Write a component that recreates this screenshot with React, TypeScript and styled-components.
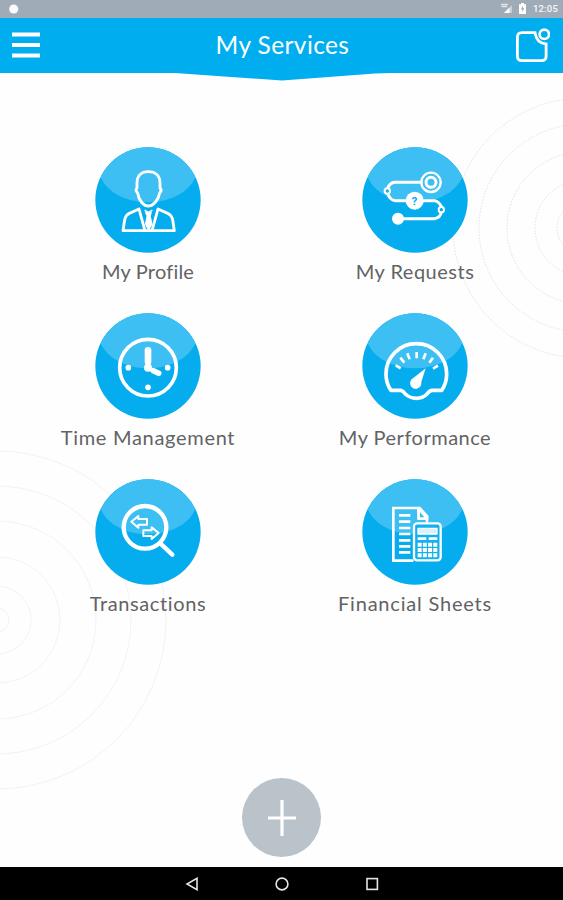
import React from 'react';
import styled, { createGlobalStyle } from 'styled-components';

const GlobalStyle = createGlobalStyle`
  * { box-sizing: border-box; }
  body { margin: 0; background: #fefefe; font-family: Lato, "Open Sans", sans-serif; }
  svg { display: block; }
`;

const Screen = styled.div`
  position: relative;
  display: flex;
  flex-direction: column;
  width: 563px;
  height: 900px;
  overflow: hidden;
  background: #fefefe;
`;

const Backdrop = styled.svg`
  position: absolute;
  inset: 0;
  pointer-events: none;
`;

const StatusBar = styled.div`
  display: flex;
  align-items: center;
  justify-content: space-between;
  height: 17.5px;
  padding: 0 5px 0 8px;
  background: #a0abb8;
`;

const StatusGroup = styled.div`
  display: flex;
  align-items: center;
`;

const Clock = styled.span`
  margin-left: 5px;
  color: #f4f7f9;
  font: 500 9.5px/17px Roboto, sans-serif;
  letter-spacing: 0.2px;
`;

const Header = styled.header`
  position: relative;
  display: flex;
  align-items: center;
  justify-content: space-between;
  height: 55.5px;
  padding: 0 13px 0 12px;
  background: #00aeef;
`;

const HeaderPoint = styled.svg`
  position: absolute;
  left: 175px;
  top: 55px;
`;

const Title = styled.h1`
  margin: 0 0 1px 10px;
  color: #fff;
  font-size: 24.5px;
  font-weight: 400;
  line-height: 30px;
  letter-spacing: 0.4px;
`;

const IconButton = styled.button`
  display: flex;
  padding: 0;
  border: 0;
  background: none;
`;

const Services = styled.main`
  position: relative;
  flex: 1;
  display: grid;
  grid-template-columns: 267px 267px;
  grid-auto-rows: 166px;
  justify-content: center;
  padding-top: 74px;
`;

const Service = styled.div`
  display: flex;
  flex-direction: column;
  align-items: center;
`;

const Label = styled.span<{ $spacing: number }>`
  margin-top: 6px;
  color: #626365;
  font-size: 20px;
  line-height: 24px;
  letter-spacing: ${(p) => p.$spacing}px;
  white-space: nowrap;
`;

const Footer = styled.div`
  position: relative;
  display: flex;
  justify-content: center;
  height: 89px;
`;

const AddButton = styled.button`
  display: flex;
  align-items: center;
  justify-content: center;
  width: 79px;
  height: 79px;
  padding: 0;
  border: 0;
  border-radius: 50%;
  background: #bac3ca;
`;

const NavBar = styled.nav`
  position: relative;
  display: flex;
  align-items: center;
  justify-content: center;
  gap: 76px;
  height: 33px;
  background: #000;
`;

type BadgeProps = { id: string; origin: [number, number]; children: React.ReactNode };

function Badge({ id, origin, children }: BadgeProps) {
  return (
    <svg width="106" height="106" viewBox="0 0 318 318">
      <clipPath id={id}>
        <circle cx="159" cy="159" r="158" />
      </clipPath>
      <circle cx="159" cy="159" r="158" fill="#05adee" />
      <ellipse cx="159" cy="65" rx="146" ry="101" fill="#3dbff3" clipPath={`url(#${id})`} />
      <g
        transform={`translate(${-origin[0]} ${-origin[1]})`}
        fill="none"
        stroke="#fff"
        strokeWidth="10"
        strokeLinejoin="round"
        strokeLinecap="round"
      >
        {children}
      </g>
    </svg>
  );
}

const profile = (
  <g strokeWidth="8.5">
    <path d="M205 94C183 94 171 107 171 128L171 143Q164 150 173 158C176 180 190 197 205 197C220 197 235 180 239 158Q247 150 240 143L240 128C240 107 227 94 205 94Z" />
    <path d="M177 206L148 219Q137 225 134 238L129 271H283L278 238Q275 225 263 219L234 206L217 268M177 206L194 268" />
    <path d="M197 216H214L211 228L216 252L206 270L196 252L201 228Z" fill="#fff" strokeWidth="3" />
    <path d="M195 210L205 217L216 210" strokeWidth="4" />
  </g>
);

const requests = (
  <g strokeWidth="9">
    <path d="M229 126H150Q134 127 128 144V158Q133 179 151 181H183M233 181H269Q283 185 289 199V216Q286 232 269 235H160" />
    <circle cx="258" cy="126" r="29" strokeWidth="7" />
    <circle cx="258" cy="126" r="15" strokeWidth="9" />
    <circle cx="127" cy="152" r="8" fill="#16b3f0" strokeWidth="6" />
    <circle cx="289" cy="208" r="8" fill="#05adee" strokeWidth="6" />
    <circle cx="159" cy="235" r="18" fill="#fff" stroke="none" />
    <circle cx="209" cy="181" r="27" fill="#fff" stroke="none" />
    <text
      x="208"
      y="194"
      textAnchor="middle"
      fill="#05adee"
      stroke="none"
      fontFamily="Roboto, sans-serif"
      fontWeight="700"
      fontSize="35"
    >
      ?
    </text>
  </g>
);

const clock = (
  <g>
    <circle cx="294" cy="188" r="85" strokeWidth="11" />
    <path d="M294 136V170" strokeWidth="20" />
    <path d="M310 197L326 205" strokeWidth="17" />
    <g fill="#fff" stroke="none">
      <circle cx="294" cy="188" r="12" />
      <circle cx="235" cy="188" r="8.5" />
      <circle cx="353" cy="188" r="8.5" />
      <circle cx="294" cy="247" r="8.5" />
    </g>
  </g>
);

const gauge = (
  <g>
    <path
      d="M184 256H213Q221 258 227 267Q241 280 260 280Q279 280 292 267Q299 257 307 256H336Q351 235 351 207A91 91 0 0 0 169 207Q169 235 184 256Z"
      strokeWidth="11"
    />
    <path
      d="M198 181L213 190M212 158L224 173M233 145L240 163M261 141V160M288 145L281 163M310 158L299 173M325 182L310 191"
      strokeWidth="8"
      strokeLinecap="butt"
    />
    <path d="M288 190L275 231A17 17 0 1 1 251 219Z" fill="#fff" stroke="none" />
  </g>
);

const search = (
  <g>
    <circle cx="195" cy="172" r="64" strokeWidth="13" />
    <path d="M244 223L277 254" strokeWidth="13" />
    <path d="M154 155L175 138V147H201V164H175V173Z" strokeWidth="6" />
    <path d="M236 189L215 172V181H190V198H215V207Z" strokeWidth="6" />
  </g>
);

const sheets = (
  <g>
    <path d="M248 272H191V114H270L292 139V154M268 116V143H292" strokeWidth="8" strokeLinejoin="miter" />
    <path d="M262 114H273L296 139V150H263Z" fill="#fff" stroke="none" />
    <path d="M271 126V142H284Z" fill="#3dbff3" stroke="none" />
    <path
      d="M208 136H242M208 155H242M208 174H242M208 192H242M208 211H242M208 229H242M208 247H242"
      strokeWidth="8"
      strokeLinecap="butt"
    />
    <rect x="253" y="160" width="80" height="111" rx="9" fill="#12b1ef" strokeWidth="7" />
    <rect x="265" y="175" width="57" height="17" fill="#d8f3fd" strokeWidth="4" />
    <path d="M264 206H290M297 206H323" strokeWidth="8" strokeLinecap="butt" />
    <path
      d="M264 224H323M264 240H323M264 256H323"
      strokeWidth="12"
      strokeDasharray="12 3.6"
      strokeLinecap="butt"
    />
  </g>
);

const services: { label: string; spacing: number; origin: [number, number]; icon: React.ReactNode }[] = [
  { label: 'My Profile', spacing: 0.2, origin: [45, 20], icon: profile },
  { label: 'My Requests', spacing: 0.5, origin: [51, 20], icon: requests },
  { label: 'Time Management', spacing: 0.7, origin: [135, 24], icon: clock },
  { label: 'My Performance', spacing: 0.5, origin: [97, 24], icon: gauge },
  { label: 'Transactions', spacing: 0.6, origin: [45, 27], icon: search },
  { label: 'Financial Sheets', spacing: 0.8, origin: [97, 27], icon: sheets },
];

export default function App() {
  return (
    <>
      <GlobalStyle />
      <Screen>
        <Backdrop width="563" height="900" fill="none">
          <g stroke="#dcdcdc" strokeWidth="0.9" strokeDasharray="1.5 1.5">
            {[26, 48, 76, 104, 130].map((r) => (
              <circle key={r} cx="583" cy="228" r={r} />
            ))}
          </g>
          <g stroke="#f0f0f0" strokeWidth="0.9">
            {[12, 34, 63, 99, 134, 169].map((r) => (
              <circle key={r} cx="-3" cy="620" r={r} />
            ))}
          </g>
        </Backdrop>

        <StatusBar>
          <svg width="12" height="12" viewBox="0 0 12 12">
            <circle cx="5.7" cy="6" r="4.6" fill="#f8fafb" />
          </svg>
          <StatusGroup>
            <svg width="28" height="13" viewBox="0 0 28 13">
              <path d="M1 2.5H8M1.5 4.5H7" stroke="#eef2f5" strokeWidth="1.3" opacity=".8" />
              <path d="M4 11L12 3V11Z" fill="#c9d1d8" />
              <path d="M4 11L9.5 5.5V11Z" fill="#fff" />
              <path d="M19 2.2H21V1H24V2.2H26V12H19Z" fill="#fff" />
              <path d="M23 3.7L20.8 7.3H22.3V10L24.3 6.3H23Z" fill="#a0abb8" />
            </svg>
            <Clock>12:05</Clock>
          </StatusGroup>
        </StatusBar>

        <Header>
          <HeaderPoint width="216" height="8">
            <path d="M0 0H216L200 .5L107 7.5L14 1Z" fill="#00aeef" />
          </HeaderPoint>
          <IconButton aria-label="Menu">
            <svg width="28" height="28" viewBox="0 0 28 28" stroke="#fff" strokeWidth="4">
              <path d="M0 3.5H28M0 14H28M0 24.5H28" />
            </svg>
          </IconButton>
          <Title>My Services</Title>
          <IconButton aria-label="Notifications">
            <svg width="35" height="35" viewBox="0 0 35 35" fill="none" stroke="#fff" strokeWidth="2.8">
              <path d="M20 4.7H7Q2.4 4.7 2.4 9.3V28Q2.4 32.6 7 32.6H26.5Q31.1 32.6 31.1 28V16Q21.5 15 20 4.7Z" />
              <circle cx="29.3" cy="6.3" r="4.7" strokeWidth="2.6" />
            </svg>
          </IconButton>
        </Header>

        <Services>
          {services.map((s, i) => (
            <Service key={s.label}>
              <Badge id={`gloss-${i}`} origin={s.origin}>
                {s.icon}
              </Badge>
              <Label $spacing={s.spacing}>{s.label}</Label>
            </Service>
          ))}
        </Services>

        <Footer>
          <AddButton aria-label="Add">
            <svg width="30" height="36" viewBox="0 0 30 36" stroke="#fff" strokeWidth="3.2">
              <path d="M15 0V36M1 18H29" />
            </svg>
          </AddButton>
        </Footer>

        <NavBar>
          <svg width="14" height="14" viewBox="0 0 14 14" fill="none" stroke="#e4e4e4" strokeWidth="1.6">
            <path d="M12 1.3V12.7L2 7Z" />
          </svg>
          <svg width="14" height="14" viewBox="0 0 14 14" fill="none" stroke="#e4e4e4" strokeWidth="1.6">
            <circle cx="7" cy="7" r="5.9" />
          </svg>
          <svg width="14" height="14" viewBox="0 0 14 14" fill="none" stroke="#e4e4e4" strokeWidth="1.6">
            <rect x="2" y="1.6" width="10.4" height="10.8" />
          </svg>
        </NavBar>
      </Screen>
    </>
  );
}
